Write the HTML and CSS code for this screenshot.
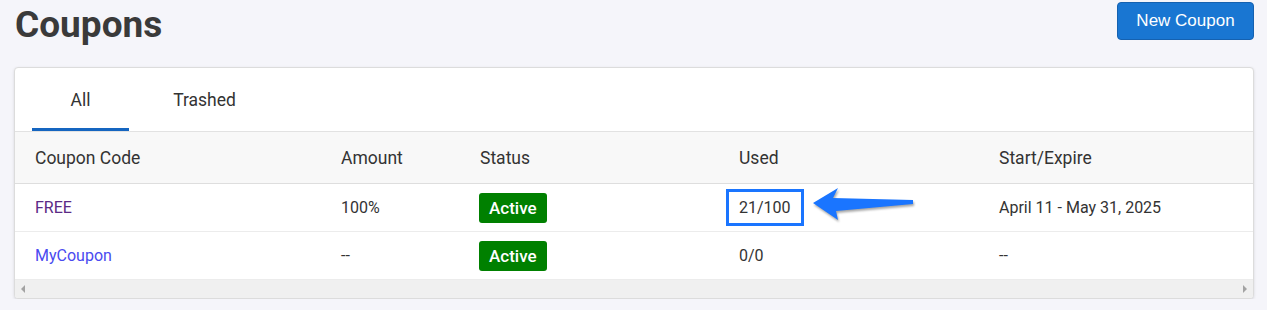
FILE: index.html
```html
<!DOCTYPE html>
<html lang="en">
<head>
    <meta charset="UTF-8">
    <meta name="viewport" content="width=device-width, initial-scale=1.0">
    <title>Coupons</title>
    <link rel="stylesheet" href="styles.css">
</head>
<body>
    <div class="page">
        <div class="page-head">
            <h1>Coupons</h1>
            <button class="btn-primary">New Coupon</button>
        </div>
        <div class="card">
            <div class="tabs">
                <div class="tab active">All</div>
                <div class="tab">Trashed</div>
            </div>
            <table class="coupons">
                <thead>
                    <tr>
                        <th class="col-code">Coupon Code</th>
                        <th class="col-amount">Amount</th>
                        <th class="col-status">Status</th>
                        <th class="col-used">Used</th>
                        <th>Start/Expire</th>
                    </tr>
                </thead>
                <tbody>
                    <tr>
                        <td><a href="#" class="visited">FREE</a></td>
                        <td>100%</td>
                        <td><span class="badge">Active</span></td>
                        <td class="used-cell">
                            <span class="highlight">21/100</span>
                            <!-- callout arrow -->
                            <svg class="arrow" width="110" height="40" viewBox="0 0 110 40">
                                <polygon points="2,17 27,2 22,12 102,14 102,18 25,25 27,34" fill="#1a75ff"/>
                            </svg>
                        </td>
                        <td>April 11 - May 31, 2025</td>
                    </tr>
                    <tr>
                        <td><a href="#">MyCoupon</a></td>
                        <td>--</td>
                        <td><span class="badge">Active</span></td>
                        <td>0/0</td>
                        <td>--</td>
                    </tr>
                </tbody>
            </table>
            <div class="hscroll">
                <span class="tri-left"></span>
                <span class="tri-right"></span>
            </div>
        </div>
    </div>
</body>
</html>
```

FILE: styles.css
```css
body {
    margin: 0;
    background: #f5f5fa;
    font-family: Roboto, "Liberation Sans", Arial, sans-serif;
    color: #333;
}
.page {
    padding: 2px 13px 0 14px;
}
.page-head {
    display: flex;
    justify-content: space-between;
    align-items: flex-start;
    height: 65px;
}
h1 {
    margin: 0;
    padding: 3px 0 0 1px;
    font-size: 37px;
    font-weight: 700;
    color: #3a3a3a;
    line-height: 40px;
}
.btn-primary {
    background: #1976d2;
    color: #fff;
    border: 1px solid #1561b0;
    border-radius: 4px;
    font-family: "Liberation Sans", Arial, sans-serif;
    font-size: 17px;
    width: 137px;
    height: 38px;
    padding: 0;
    cursor: pointer;
}
.card {
    background: #fff;
    border: 1px solid #dcdcdc;
    border-radius: 4px;
    box-shadow: 0 1px 3px rgba(0, 0, 0, 0.12);
    overflow: hidden;
}
.tabs {
    display: flex;
    padding-left: 17px;
    height: 63px;
    border-bottom: 1px solid #e2e2e2;
}
.tab {
    width: 97px;
    text-align: center;
    line-height: 64px;
    font-size: 17.5px;
    color: #333;
    margin-right: 27px;
}
.tab.active {
    border-bottom: 3px solid #1565c0;
}
.coupons {
    width: 100%;
    border-collapse: collapse;
    font-size: 16px;
}
.coupons th {
    background: #f8f8f8;
    font-size: 17.5px;
    font-weight: 400;
    text-align: left;
    height: 51px;
    padding: 0 20px;
    border-bottom: 1px solid #dedede;
}
.coupons td {
    height: 47px;
    padding: 0 20px;
    border-bottom: 1px solid #ececec;
}
.coupons tbody tr:last-child td {
    border-bottom: none;
}
.col-code { width: 266px; }
.col-amount { width: 99px; }
.col-status { width: 219px; }
.col-used { width: 220px; }
.coupons a {
    color: #4a4af0;
    text-decoration: none;
}
.coupons a.visited {
    color: #5b2a86;
}
.badge {
    display: inline-block;
    background: #008000;
    color: #fff;
    font-size: 17px;
    font-weight: 500;
    padding: 5px 10px;
    border-radius: 3px;
    margin-left: -1px;
}
.used-cell {
    position: relative;
}
.highlight {
    display: inline-block;
    border: 3px solid #1a75ff;
    padding: 6px 10px;
    margin-left: -13px;
}
.arrow {
    position: absolute;
    left: 92px;
    top: 2px;
    filter: drop-shadow(1px 2px 1px rgba(0, 0, 0, 0.35));
}
.hscroll {
    height: 18px;
    background: #f0f0f0;
    border-top: 1px solid #ececec;
    display: flex;
    justify-content: space-between;
    align-items: center;
    padding: 0 6px;
}
.tri-left {
    border-top: 4px solid transparent;
    border-bottom: 4px solid transparent;
    border-right: 4px solid #a3a3a3;
}
.tri-right {
    border-top: 4px solid transparent;
    border-bottom: 4px solid transparent;
    border-left: 4px solid #a3a3a3;
}
```
